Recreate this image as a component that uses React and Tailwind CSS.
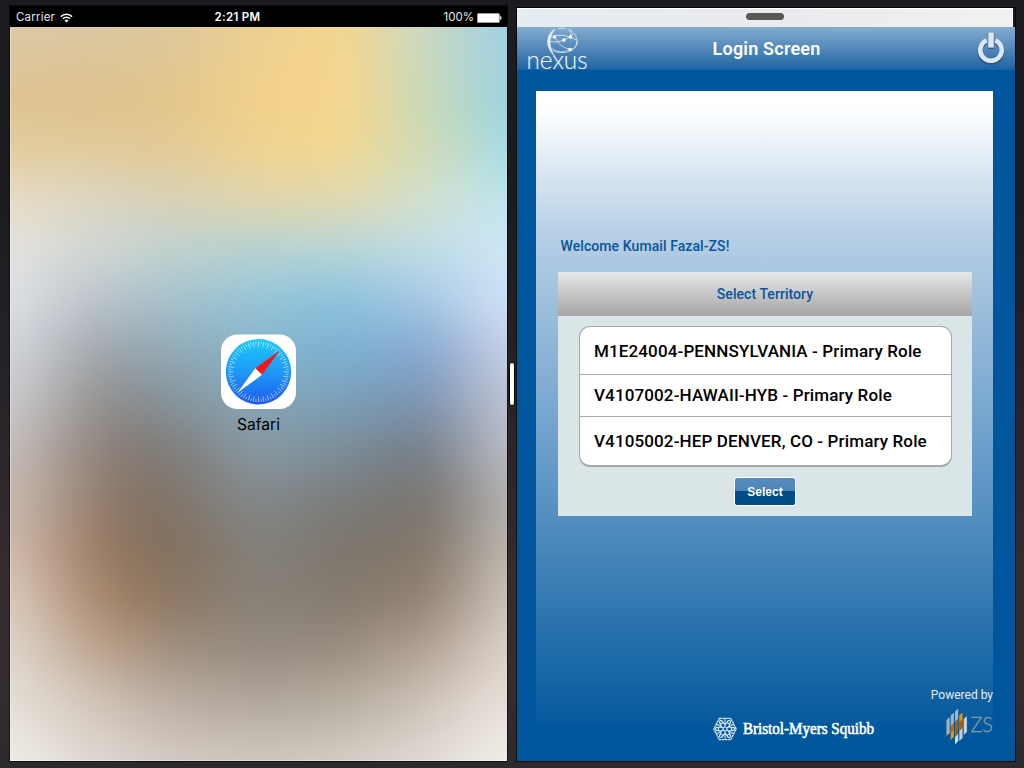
import React from "react";

const STOPS = [0, 82, 123, 165, 248, 331, 414, 456, 497];

const ROWS = [
  [27, "#dcc9a8 #dcc8a3 #dcc8a0 #dfc89c #eccf92 #f6d68f #ccd9c3 #b6d4d4 #a3d1e4"],
  [100, "#dec391 #dfc28e #e0c48c #e4c68b #f1d08a #f8d78c #c9d8b8 #b3d7cb #9dd3e2"],
  [150, "#e2cd9f #e2cb9b #e2ca99 #e3ca97 #efd391 #f3d891 #d0dbb6 #bcdbcd #a6dce5"],
  [200, "#e8dcc6 #dcd7c2 #d8d2bc #d8d1b6 #e0d5ae #e1d9b1 #d2e1cf #cae4e0 #bde5f0"],
  [250, "#e4e3e0 #d1d6d4 #c8d5d2 #bfd2ce #b6d3d4 #b7d5d8 #bfdce6 #c6e1f0 #d0e7f6"],
  [300, "#dee0e5 #bcc4ca #b0c2cb #a4c1cd #96c5d8 #8bc2dd #a5c7e4 #bcd4ee #d0e1f4"],
  [350, "#d4d6dc #a4a9ae #98a5ae #91abb8 #86b3c8 #7cb2d2 #86a8d0 #a6b9d8 #c8d3e6"],
  [400, "#cccccf #989593 #888b8d #86959e #88a7b6 #7aa0bb #7b93b2 #9da9bf #bfc6d6"],
  [450, "#c7bfbc #93867f #837a74 #807e7b #8799a3 #7c8d99 #757d87 #959ca6 #bbbdc6"],
  [500, "#c9b9ae #988272 #857163 #80756b #84898b #7a7c7b #79746e #928e8b #b6b3b2"],
  [550, "#d2bcac #9f7f68 #8a735e #82705e #84817b #7c756c #827669 #9c938a #bfb8b0"],
  [600, "#dccbbd #ad8d73 #9a7c63 #8c7864 #89827a #857b6f #928271 #aea095 #cec6be"],
  [650, "#dfd6cc #c0a792 #b09883 #a08f7f #958c81 #998d81 #b2a194 #c8bab0 #dcd4cb"],
  [700, "#e5e0d8 #d2c5b9 #c6b7ab #bbada3 #b0a69b #b5ac9f #cbc1b6 #dcd3cb #e8dfd9"],
  [760, "#f0ede6 #dfd9d2 #d9d2cb #d3cac3 #cfc8bf #d4cdc5 #e0dad3 #eae5e0 #f2eee9"],
].map(([y, c]) => ({ y: y - 27, colors: c.split(" ") }));

function Wallpaper() {
  return (
    <svg className="absolute inset-0 h-full w-full" viewBox="0 0 497 734" preserveAspectRatio="none" aria-hidden="true">
      <defs>
        {ROWS.map((r, i) => (
          <linearGradient key={i} id={"row" + i} gradientUnits="userSpaceOnUse" x1="0" x2="497" y1="0" y2="0">
            {r.colors.map((c, j) => (
              <stop key={j} offset={STOPS[j] / 497} stopColor={c} />
            ))}
          </linearGradient>
        ))}
        <linearGradient id="fade" x1="0" x2="0" y1="0" y2="1">
          <stop offset="0" stopColor="#fff" stopOpacity="0" />
          <stop offset="1" stopColor="#fff" />
        </linearGradient>
        <mask id="fadeMask" maskContentUnits="objectBoundingBox" x="0" y="0" width="1" height="1">
          <rect width="1" height="1" fill="url(#fade)" />
        </mask>
        <filter id="soft" filterUnits="userSpaceOnUse" x="-80" y="-60" width="657" height="853" colorInterpolationFilters="sRGB">
          <feGaussianBlur stdDeviation="20 14" />
        </filter>
      </defs>
      <g filter="url(#soft)">
        <rect x="-80" y="-60" width="657" height="62" fill="url(#row0)" />
        {ROWS.slice(0, -1).map((r, i) => {
          const h = ROWS[i + 1].y - r.y;
          return (
            <g key={i}>
              <rect x="-80" y={r.y} width="657" height={h} fill={`url(#row${i})`} />
              <rect x="-80" y={r.y} width="657" height={h} fill={`url(#row${i + 1})`} mask="url(#fadeMask)" />
            </g>
          );
        })}
        <rect x="-80" y="733" width="657" height="60" fill="url(#row14)" />
      </g>
    </svg>
  );
}

function SafariIcon() {
  const ticks = Array.from({ length: 72 }, (_, i) => i * 5);
  return (
    <svg width="75" height="75" viewBox="0 0 75 75" aria-hidden="true">
      <defs>
        <linearGradient id="sky" x1="0" x2="0" y1="0" y2="1">
          <stop offset="0" stopColor="#1dcbfb" />
          <stop offset="0.5" stopColor="#1f98f5" />
          <stop offset="1" stopColor="#1c5cf0" />
        </linearGradient>
      </defs>
      <rect y=".4" width="75" height="74.6" rx="16.5" fill="#fff" />
      <circle cx="37.5" cy="37.8" r="32.7" fill="url(#sky)" />
      {ticks.map((a, i) => (
        <line key={a} x1="37.5" x2="37.5" y1="7.5" y2={i % 2 ? 10.3 : 12.9} stroke="#fff" strokeOpacity="0.75" strokeWidth="0.7" transform={`rotate(${a} 37.5 37.8)`} />
      ))}
      <path d="M58.500 16.800 34.300 34.300 41 40.800Z" fill="#fb1414" />
      <path d="M34.300 34.300 41 40.800 16.500 58.800Z" fill="#fff" />
    </svg>
  );
}

function WifiIcon() {
  return (
    <svg width="13" height="10" viewBox="0 0 13 10" fill="none" stroke="#fff" strokeWidth="1.5" aria-hidden="true">
      <path d="M.9 3.600a7.900 7.900 0 0 1 11.200 0" />
      <path d="M2.900 5.700a5.100 5.100 0 0 1 7.200 0" />
      <path d="M6.500 9.400 4.500 7.400a2.900 2.900 0 0 1 4 0Z" fill="#fff" stroke="none" />
    </svg>
  );
}

function BatteryIcon() {
  return (
    <svg width="25" height="10" viewBox="0 0 25 10" aria-hidden="true">
      <rect x="0.4" y="0.4" width="22" height="9.2" rx="1.2" fill="#fff" stroke="#aaa" strokeWidth="0.8" />
      <path d="M23.200 2.800c1.700.5 1.700 3.900 0 4.400Z" fill="#fff" />
    </svg>
  );
}

function NexusLogo() {
  return (
    <svg className="overflow-visible" width="64" height="43" viewBox="0 0 64 43" fill="none" stroke="#e6f0f8" aria-hidden="true">
      <path d="M27.500 29C19 21 17.500 8.500 28 2C22 9.500 21 19 27.500 29Z" fill="#e6f0f8" strokeWidth="0.6" />
      <path d="M31 1.800Q35 .6 38.500 1.400M42 2.500C52 8 53 19 44 23.500C38 26.500 31 26 25.500 23.500" strokeWidth="1" strokeOpacity=".8" />
      <path d="M22 14.500Q37 17 46.500 6.500M23 10.500Q36 5 49.500 13" strokeWidth=".9" strokeOpacity=".85" />
      <path d="M27.500 9Q31 19.500 43 22.500Q50 22 50 14" strokeWidth=".9" strokeOpacity=".85" />
      <path d="M41.500 2Q45 5 43.500 9M24 21Q34 28 43 22" strokeWidth=".9" strokeOpacity=".7" />
      <g fill="#fff" stroke="none">
        <circle cx="27.500" cy="10" r="1.700" />
        <circle cx="37" cy="13" r="1.700" />
        <circle cx="43.500" cy="10" r="1.700" />
        <circle cx="43" cy="22.500" r="1.800" />
      </g>
      <text x="-0.5" y="41.500" fill="#eaf2f9" stroke="#eaf2f9" strokeWidth=".15" fontFamily="Lato, sans-serif" fontWeight="300" fontSize="25" textLength="61" lengthAdjust="spacingAndGlyphs">nexus</text>
    </svg>
  );
}

function PowerIcon() {
  return (
    <svg width="30" height="34" viewBox="0 0 30 34" fill="none" aria-hidden="true">
      <g stroke="#28506f" strokeOpacity=".85" transform="translate(0 1.2)">
        <path d="M11 8.100A10.900 10.900 0 1 0 19 8.100" strokeWidth="5" />
      </g>
      <path d="M10.700 8.300A10.700 10.700 0 1 0 19.300 8.300" stroke="#dce8f1" strokeWidth="4.600" />
      <path d="M15 .5v16" stroke="#5d88ab" strokeWidth="7.600" />
      <path d="M12.100 16.200h5.800" stroke="#28506f" strokeWidth="1.200" />
      <path d="M15 .5v15" stroke="#dce8f1" strokeWidth="5.400" />
    </svg>
  );
}

function BristolLogo() {
  return (
    <svg className="overflow-visible" width="162" height="24" viewBox="-12 -12 162 24" fill="none" stroke="#d9e9f5" aria-hidden="true">
      <path d="M-5.700-10.600H5.700L11.200 0 5.700 10.600H-5.700L-11.200 0Z" strokeWidth="1.300" strokeDasharray="2.500 .5" />
      {[0, 60, 120, 180, 240, 300].map((a) => (
        <g key={a} transform={`rotate(${a})`} strokeWidth="1.100">
          <path d="M0-2V-10M0-4 3.500-8.500M0-4-3.500-8.500" />
          <circle cx="4" cy="-6.900" r="1.600" />
        </g>
      ))}
      <circle r="2" strokeWidth="1.200" />
      <text x="18" y="5.300" fill="#fff" stroke="#fff" strokeWidth=".6" fontFamily="'Liberation Serif', serif" fontSize="17.5" textLength="131" lengthAdjust="spacingAndGlyphs">Bristol-Myers Squibb</text>
    </svg>
  );
}

function ZsLogo() {
  return (
    <svg className="overflow-visible" width="47" height="38" viewBox="0 0 47 38" aria-hidden="true">
      <path d="M0.500 12 3.700 9V25L.5 28Z" fill="#9fb3c2" />
      <path d="M4.700 7.500 7.900 4.500V15L4.700 18Z" fill="#a9b5bd" />
      <path d="M9 3.500 12.200.5V11L9 14Z" fill="#a9b5bd" />
      <path d="M4.700 18 7.900 15V29L4.700 32Z" fill="#f39200" />
      <path d="M9 14 12.200 11V26L9 29Z" fill="#a95f08" />
      <path d="M13.300 7.500 16.500 4.500V20L13.300 23Z" fill="#f39200" />
      <path d="M13.300 14 16.500 11V20L13.300 23Z" fill="#a95f08" />
      <path d="M4.700 18 7.900 15V22L4.700 25Z" fill="#b96a08" />
      <path d="M9 29 12.200 26V33L9 36.500Z" fill="#d6dadd" />
      <path d="M13.300 23 16.500 20V30L13.300 33Z" fill="#c7ced3" />
      <path d="M17.700 11 20.900 8V24L17.700 27Z" fill="#ccd3d8" />
      <text x="24.500" y="24" fill="#8998a8" stroke="#8998a8" strokeWidth=".35" fontFamily="Lato, sans-serif" fontWeight="300" fontSize="22" textLength="22.500" lengthAdjust="spacingAndGlyphs">ZS</text>
    </svg>
  );
}

function StatusBar() {
  return (
    <div className="grid h-[21px] grid-cols-[1fr_auto_1fr] items-center bg-black pt-[2px] pr-[5px] pl-[6px] font-['Inter',sans-serif] text-[11.5px] leading-none text-white">
      <div className="flex items-center gap-[5px]">
        <span className="tracking-[0.2px] text-gray-200">Carrier</span>
        <WifiIcon />
      </div>
      <div className="mr-[43px] text-center font-semibold tracking-[0.3px] whitespace-nowrap">2:21 PM</div>
      <div className="flex items-center justify-end gap-[3px]">
        <span className="text-gray-200">100%</span>
        <BatteryIcon />
      </div>
    </div>
  );
}

function HomePane() {
  return (
    <section className="flex h-[755px] w-[497px] flex-col shadow-[0_0_0_1px_rgba(0,0,0,0.55)]">
      <StatusBar />
      <div className="relative flex flex-1 flex-col items-center overflow-hidden pt-[307px]">
        <Wallpaper />
        <div className="absolute inset-0 border-b border-l border-white/40" />
        <div className="relative flex flex-col items-center">
          <SafariIcon />
          <span className="mt-[7px] font-['Inter',sans-serif] text-[15.6px] leading-[18px] text-black">Safari</span>
        </div>
      </div>
    </section>
  );
}

function TerritoryPanel() {
  return (
    <div className="mt-[17px] ml-[22px] flex h-[244px] w-[414px] flex-col items-center bg-[#d9e5e6]">
      <h2 className="flex h-[44px] w-full items-center justify-center bg-linear-to-b from-[#e6e7e9] to-[#a6a6a6] text-[14px] font-medium tracking-[0.06px] text-[#0a559b]">Select Territory</h2>
      <ul className="mt-[10px] flex h-[141px] w-[373px] flex-col divide-y divide-[#a9adaf] overflow-hidden rounded-[11px] border border-b-2 border-[#a3a9ac] bg-white text-[17px] font-medium tracking-[0.13px] text-black">
        <li className="flex h-[48px] items-center pt-[2px] pl-[14.500px]">M1E24004-PENNSYLVANIA - Primary Role</li>
        <li className="flex h-[42px] items-center pl-[14.500px]">V4107002-HAWAII-HYB - Primary Role</li>
        <li className="flex flex-1 items-center pt-px pl-[14.500px]">V4105002-HEP DENVER, CO - Primary Role</li>
      </ul>
      <button className="mt-[10px] h-[29px] w-[62px] rounded-[3px] border border-white bg-[linear-gradient(#558dbd_0,#4b86b8_48%,#004c86_50%,#004c86_100%)] font-['Liberation_Sans',sans-serif] text-[12px] font-bold text-white">Select</button>
    </div>
  );
}

function LoginPane() {
  return (
    <section className="mt-[2px] ml-[10px] flex h-[753px] w-[498px] flex-col font-['Roboto',sans-serif] shadow-[0_0_0_1px_rgba(0,0,0,0.7)]">
      <div className="flex h-[19px] bg-[#1a1a1c] pr-[2px]">
        <div className="flex flex-1 items-center justify-center border-t border-r border-white bg-linear-to-r from-[#e5edf2] via-[#eaeaee] to-[#f0f1f1]">
          <div className="mt-[-3px] h-[7px] w-[38px] rounded-full bg-[#5a5757]" />
        </div>
      </div>
      <header className="grid h-[43px] grid-cols-[1fr_auto_1fr] items-center bg-linear-to-b from-[#84add0] to-[#1963a2] pr-[9px] pl-[10px]">
        <NexusLogo />
        <h1 className="text-[18px] font-semibold tracking-[0.2px] text-white">Login Screen</h1>
        <div className="flex justify-end">
          <PowerIcon />
        </div>
      </header>
      <main className="flex flex-1 flex-col bg-[#00569c] pt-[21px] pr-[22px] pl-[19px]">
        <div className="flex flex-1 flex-col bg-[linear-gradient(#fff_0,#fdfeff_20px,#b6cfe5_142px,#5e96c6_395px,#4f8cbd_438px,#00569c_645px)]">
          <p className="mt-[146px] pl-[24.500px] text-[14px] leading-[18px] font-medium tracking-[0.08px] text-[#0a559b]">Welcome Kumail Fazal-ZS!</p>
          <TerritoryPanel />
          <footer className="mt-[171px] flex justify-between pl-[177px] text-white">
            <div className="pt-[30px]">
              <BristolLogo />
            </div>
            <div className="flex flex-col items-end gap-[5px]">
              <span className="text-[12px] leading-[16px] text-[#e4edf5]">Powered by</span>
              <ZsLogo />
            </div>
          </footer>
        </div>
      </main>
    </section>
  );
}

export default function App() {
  return (
    <div className="relative flex h-[768px] w-[1024px] overflow-hidden bg-[linear-gradient(#1c1c20_0,#1c1c20_25%,#262328_50%,#352d30_75%,#352e31_86%,#2c2a2c_100%)] pt-[6px] pl-[10px]">
      <HomePane />
      <LoginPane />
      <div className="absolute top-[362px] left-[509px] h-[44px] w-[6px] rounded-full border border-black bg-white" />
    </div>
  );
}
